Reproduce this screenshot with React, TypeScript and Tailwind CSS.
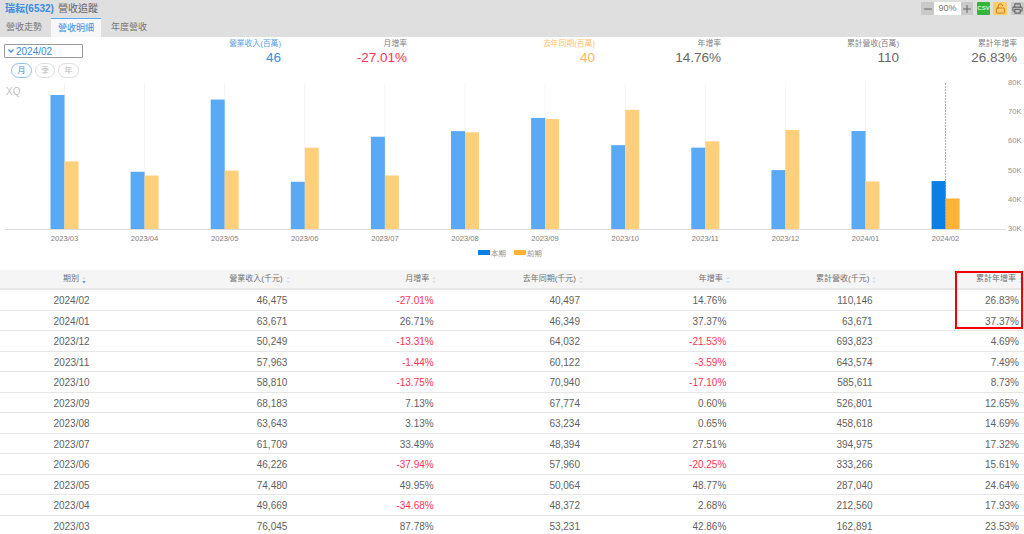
import { LockOpen, Minus, Plus, Printer } from "lucide-react";

const rows = [
  ["2024/02", "46,475", "-27.01%", "40,497", "14.76%", "110,146", "26.83%"],
  ["2024/01", "63,671", "26.71%", "46,349", "37.37%", "63,671", "37.37%"],
  ["2023/12", "50,249", "-13.31%", "64,032", "-21.53%", "693,823", "4.69%"],
  ["2023/11", "57,963", "-1.44%", "60,122", "-3.59%", "643,574", "7.49%"],
  ["2023/10", "58,810", "-13.75%", "70,940", "-17.10%", "585,611", "8.73%"],
  ["2023/09", "68,183", "7.13%", "67,774", "0.60%", "526,801", "12.65%"],
  ["2023/08", "63,643", "3.13%", "63,234", "0.65%", "458,618", "14.69%"],
  ["2023/07", "61,709", "33.49%", "48,394", "27.51%", "394,975", "17.32%"],
  ["2023/06", "46,226", "-37.94%", "57,960", "-20.25%", "333,266", "15.61%"],
  ["2023/05", "74,480", "49.95%", "50,064", "48.77%", "287,040", "24.64%"],
  ["2023/04", "49,669", "-34.68%", "48,372", "2.68%", "212,560", "17.93%"],
  ["2023/03", "76,045", "87.78%", "53,231", "42.86%", "162,891", "23.53%"],
];

const bars = [
  ["2023/03", 76045, 53231],
  ["2023/04", 49669, 48372],
  ["2023/05", 74480, 50064],
  ["2023/06", 46226, 57960],
  ["2023/07", 61709, 48394],
  ["2023/08", 63643, 63234],
  ["2023/09", 68183, 67774],
  ["2023/10", 58810, 70940],
  ["2023/11", 57963, 60122],
  ["2023/12", 50249, 64032],
  ["2024/01", 63671, 46349],
  ["2024/02", 46475, 40497],
] as const;

const headers = ["營業收入(千元)", "月增率", "去年同期(千元)", "年增率", "累計營收(千元)", "累計年增率"];

// chart coordinates are relative to y=80; the svg itself starts a few px higher for the top label
const baseY = 149;
const barY = (v: number) => baseY - (v - 30000) * 0.00291;
const groupX = (i: number) => 64.5 + i * 80.1;

function SortIcon({ active }: { active?: boolean }) {
  return (
    <svg width="4" height="8" viewBox="0 0 4 8" className="ml-[3px] mt-[2px] shrink-0">
      <path d="M2 0.5L3.8 3H0.2Z" fill="#cfe2f5" />
      <path d="M2 7.5L3.8 5H0.2Z" fill={active ? "#5b9fe0" : "#cfe2f5"} />
    </svg>
  );
}

function Kpi({ label, value, width, labelColor, valueColor }: { label: string; value: string; width: string; labelColor: string; valueColor: string }) {
  return (
    <div className={`${width} text-right`}>
      <div className={`text-[7.8px] leading-[10px] ${labelColor}`}>{label}</div>
      <div className={`text-[13.5px] leading-[18px] ${valueColor}`}>{value}</div>
    </div>
  );
}

function Chart() {
  return (
    <svg width="1024" height="186" viewBox="0 -4 1024 186" className="block">
      {bars.map((b, i) => (
        <line key={b[0]} x1={groupX(i)} x2={groupX(i)} y1={3} y2={baseY} stroke={i === 11 ? "#aaa" : "#f4f4f4"} strokeDasharray={i === 11 ? "2 1" : undefined} />
      ))}
      <text x="6" y="15" fontSize="10" fill="#c2c2c2">XQ</text>
      {bars.map((b, i) => {
        const x = groupX(i);
        const last = i === 11;
        return (
          <g key={b[0]}>
            <rect x={x - 14} y={barY(b[1])} width="14" height={baseY - barY(b[1])} fill={last ? "#0a7fe8" : "#5aa9f5"} />
            <rect x={x} y={barY(b[2])} width="14" height={baseY - barY(b[2])} fill={last ? "#ffb233" : "#ffd07c"} />
            <text x={x} y={160.5} fontSize="7.6" fill="#808080" textAnchor="middle">{b[0]}</text>
          </g>
        );
      })}
      <line x1="5" x2="1006" y1={baseY + 0.5} y2={baseY + 0.5} stroke="#ddd" />
      {["80K", "70K", "60K", "50K", "40K", "30K"].map((t, i) => (
        <text key={t} x="1008" y={5 + i * 29.2} fontSize="7.6" fill="#909090">{t}</text>
      ))}
      <rect x="478" y="170" width="12" height="5" fill="#0a7fe8" />
      <text x="491" y="175.5" fontSize="7.4" fill="#909090">本期</text>
      <rect x="514" y="170" width="12" height="5" fill="#ffb233" />
      <text x="527" y="175.5" fontSize="7.4" fill="#909090">前期</text>
    </svg>
  );
}

export default function App() {
  return (
    <div className="w-[1024px] h-[534px] overflow-hidden bg-white text-[#5f5f5f] font-['Liberation_Sans','Noto_Sans_CJK_TC',sans-serif]">
      <header className="h-[37px] bg-[#dfdfdf] flex flex-col">
        <div className="h-[18px] flex items-start justify-between">
          <div className="pl-[5px] pt-[2px] text-[10px] leading-[14px]">
            <span className="font-bold text-[#3b8be0]">瑞耘(6532)</span>
            <span className="ml-[4px] text-[#666]">營收追蹤</span>
          </div>
          <div className="flex items-center pt-[2px]">
            <div className="w-[13px] h-[13px] bg-[#c9c9c9] flex items-center justify-center">
              <Minus size={12} color="#666" strokeWidth={2} />
            </div>
            <div className="w-[27px] h-[13px] bg-white text-[9px] leading-[12px] text-center text-[#777]">90%</div>
            <div className="w-[12px] h-[13px] bg-[#c9c9c9] flex items-center justify-center">
              <Plus size={12} color="#666" strokeWidth={2} />
            </div>
            <div className="ml-[4px] w-[13px] h-[13px] bg-[#35b33a] rounded-[1px] text-[6px] leading-[13px] font-bold text-center text-[#d9f7c8]">CSV</div>
            <div className="ml-[3px] w-[14px] h-[13px] bg-[#ffcc70] rounded-[1px] flex items-center justify-center">
              <LockOpen size={11} color="#c77a10" strokeWidth={2} />
            </div>
            <div className="ml-[4px] w-[13px] h-[13px] bg-[#c9c9c9] rounded-[1px] flex items-center justify-center">
              <Printer size={11} color="#666" strokeWidth={2.4} />
            </div>
          </div>
        </div>
        <nav className="h-[19px] flex text-[9px] leading-[19px] text-[#777]">
          <div className="w-[51px] pl-[6px]">營收走勢</div>
          <div className="w-[50px] bg-[#f7f7f7] border-t border-[#5aa9f5] text-center leading-[18px] text-[#3b8be0]">營收明細</div>
          <div className="pl-[10px]">年度營收</div>
        </nav>
      </header>

      <section className="h-[39px] flex">
        <div className="w-[215px] shrink-0 pl-[4px] pt-[7px]">
          <div className="w-[79px] h-[14px] border border-[#999] rounded-[1px] flex items-center text-[10px] text-[#3b8be0]">
            <svg width="6" height="4" viewBox="0 0 6 4" className="ml-[3px] mr-[2px]">
              <path d="M0.5 0.5L3 3L5.5 0.5" fill="none" stroke="#3b8be0" strokeWidth="1.3" />
            </svg>
            2024/02
          </div>
          <div className="flex pl-[7px] mt-[5px] gap-[3px] text-[8px] leading-[13px] text-center">
            <div className="w-[21px] h-[15px] rounded-full border border-[#8fc0ee] text-[#3b8be0]">月</div>
            <div className="w-[20px] h-[15px] rounded-full border border-[#ddd] text-[#bbb]">季</div>
            <div className="w-[21px] h-[15px] rounded-full border border-[#ddd] text-[#bbb]">年</div>
          </div>
        </div>
        <div className="flex pt-[2px]">
          <Kpi label="營業收入(百萬)" value="46" width="w-[66px]" labelColor="text-[#5a9fe8]" valueColor="text-[#3b8be0]" />
          <Kpi label="月增率" value="-27.01%" width="w-[126px]" labelColor="text-[#808080]" valueColor="text-[#ff3355]" />
          <Kpi label="去年同期(百萬)" value="40" width="w-[188px]" labelColor="text-[#ffc070]" valueColor="text-[#ffb45c]" />
          <Kpi label="年增率" value="14.76%" width="w-[126px]" labelColor="text-[#808080]" valueColor="text-[#666]" />
          <Kpi label="累計營收(百萬)" value="110" width="w-[178px]" labelColor="text-[#808080]" valueColor="text-[#666]" />
          <Kpi label="累計年增率" value="26.83%" width="w-[118px]" labelColor="text-[#808080]" valueColor="text-[#666]" />
        </div>
      </section>

      <Chart />

      <div className="relative mt-[8px]">
        <div className="h-[20px] grid grid-cols-[143px_repeat(6,1fr)] pr-[1px] bg-[#f5f5f5] border-b-2 border-[#e8e8e8] text-[8px] leading-[18px] text-[#707070]">
          <div className="flex justify-center pl-[6px]">
            期別
            <span className="flex items-center"><SortIcon active /></span>
          </div>
          {headers.map((h) => (
            <div key={h} className="flex justify-end">
              {h}
              <span className="flex items-center"><SortIcon /></span>
            </div>
          ))}
        </div>
        {rows.map((r) => (
          <div key={r[0]} className="h-[20.55px] grid grid-cols-[141px_repeat(6,1fr)] pr-[5px] pt-[1px] border-b border-[#e6e6e6] text-[10px] leading-[19.5px]">
            {r.map((c, i) => (
              <div key={i} className={`${i === 0 ? "text-center pl-[2px]" : "text-right"} ${c.startsWith("-") ? "text-[#ff3355]" : ""}`}>
                {c}
              </div>
            ))}
          </div>
        ))}
        <div className="absolute left-[955px] top-[1px] w-[68px] h-[58px] border-2 border-[#f00000]" />
      </div>
    </div>
  );
}
